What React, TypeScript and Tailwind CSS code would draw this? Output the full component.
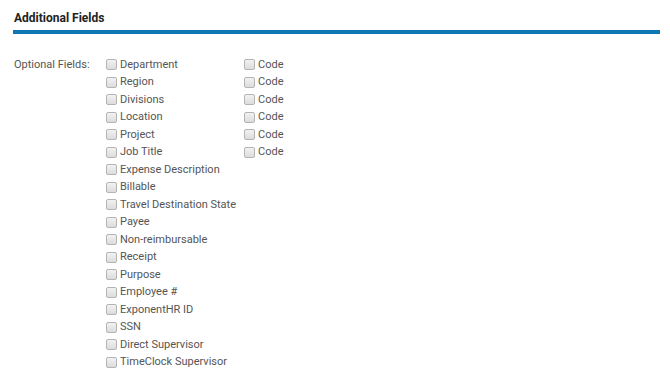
import React from "react";

const fields = [
  "Department",
  "Region",
  "Divisions",
  "Location",
  "Project",
  "Job Title",
  "Expense Description",
  "Billable",
  "Travel Destination State",
  "Payee",
  "Non-reimbursable",
  "Receipt",
  "Purpose",
  "Employee #",
  "ExponentHR ID",
  "SSN",
  "Direct Supervisor",
  "TimeClock Supervisor",
];

function Box() {
  return (
    <span className="inline-block w-[11px] h-[11px] rounded-[2px] border border-[#b4b4b4] bg-gradient-to-b from-[#f2f2f2] to-[#dcdcdc] shrink-0" />
  );
}

export default function App() {
  return (
    <div className="w-[670px] h-[378px] bg-white text-[#444] font-['Roboto',sans-serif] overflow-hidden">
      <div className="pl-[13px] pr-[10px] pt-[10px]">
        <div className="h-[20px] text-[12px] font-bold text-[#222] leading-[16px] pl-[1px]">Additional Fields</div>
        <div className="h-[4px] bg-[#0f77b4]" />
      </div>
      <div className="flex pl-[14px] pt-[22px] text-[11px] text-[#555]">
        <div className="w-[92px] leading-[17.5px]">Optional Fields:</div>
        <div className="flex flex-col">
          {fields.map((f, i) => (
            <div key={f} className="flex items-center h-[17.5px]">
              <div className="w-[138px] flex items-center gap-[3px]">
                <Box />
                <span>{f}</span>
              </div>
              {i < 6 && (
                <div className="flex items-center gap-[3px]">
                  <Box />
                  <span>Code</span>
                </div>
              )}
            </div>
          ))}
        </div>
      </div>
    </div>
  );
}
